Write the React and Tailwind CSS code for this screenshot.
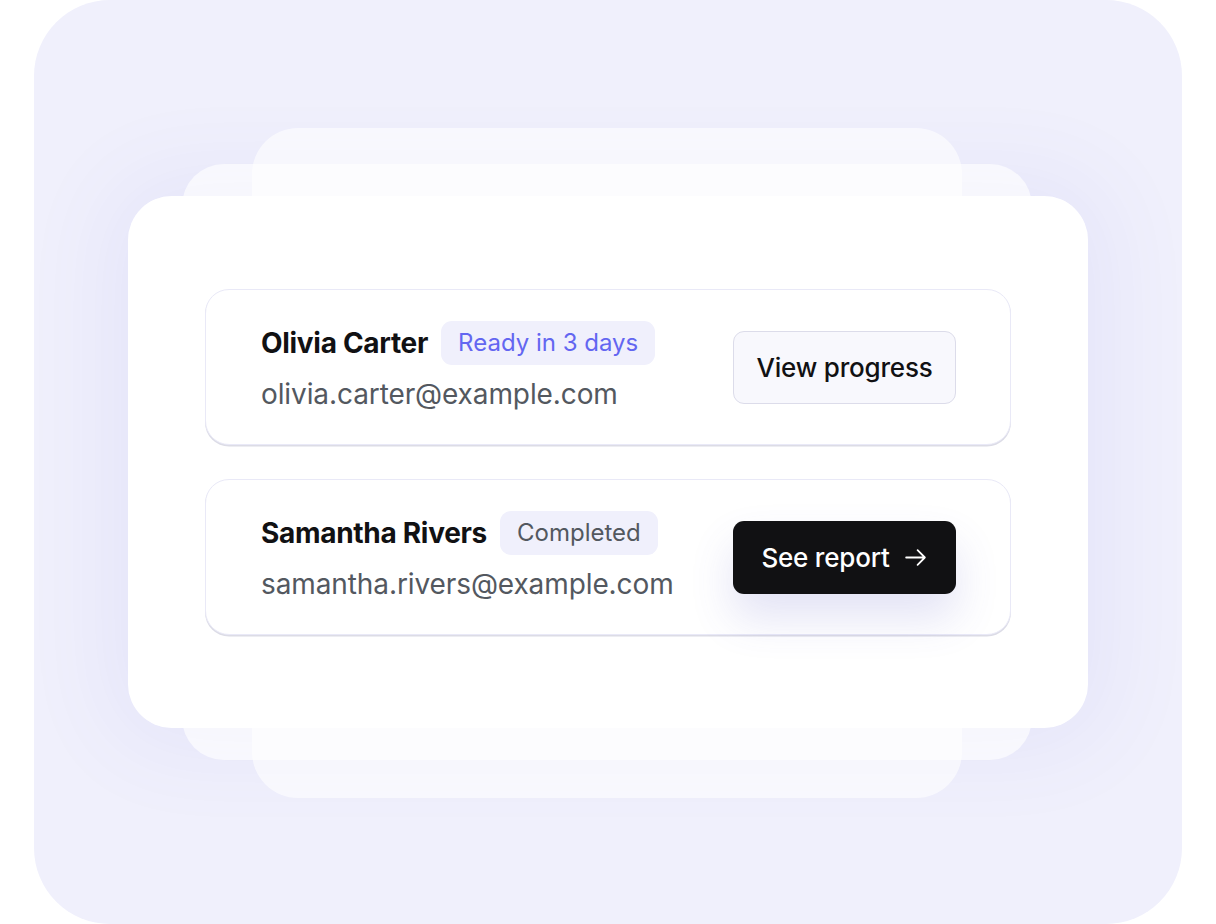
import React from "react";

function Row({ name, badge, badgeClass, email, children }) {
  return (
    <div className="flex h-[156px] items-center justify-between rounded-[24px] border-[1.5px] border-[#e9e9f7] bg-white pl-[55px] pr-[54px] shadow-[0_1.5px_0_#dcdce6]">
      <div className="flex flex-col pb-[6px]">
        <div className="flex items-center gap-[13px]">
          <span className="text-[28px] font-bold leading-none tracking-[-0.3px] text-[#111113]">{name}</span>
          <span className={"flex h-[44px] items-center rounded-[11px] bg-[#f0f0fc] px-[17px] text-[24px] leading-none " + badgeClass}>{badge}</span>
        </div>
        <span className="mt-[15px] text-[28px] leading-none tracking-[-0.1px] text-[#53585f]">{email}</span>
      </div>
      {children}
    </div>
  );
}

export default function App() {
  return (
    <div className="w-[1216px] h-[924px] bg-white px-[34px]" style={{ fontFamily: "Inter, 'Noto Sans', sans-serif" }}>
      <div className="flex h-[924px] justify-center rounded-[76px] bg-[#f0f0fc] pt-[196px]">
        <div className="relative h-[532px] w-[960px] rounded-[44px] shadow-[0_0_90px_20px_rgba(90,90,210,0.07)]">
          <div className="absolute left-[124px] right-[126px] top-[-68px] bottom-[-70px] rounded-[46px] bg-white/60"></div>
          <div className="absolute left-[54px] right-[56px] top-[-32px] bottom-[-32px] rounded-[42px] bg-white/65"></div>
          <div className="relative flex h-full flex-col gap-[34px] rounded-[44px] bg-white px-[77px] pt-[93px]">
            <Row name="Olivia Carter" badge="Ready in 3 days" badgeClass="text-[#6366f1]" email="olivia.carter@example.com">
              <button className="flex h-[73px] w-[223px] items-center justify-center rounded-[11px] border-[1.5px] border-[#dcdcea] bg-[#f8f8fd] text-[26px] font-medium tracking-[-0.2px] text-[#111113]">
                View progress
              </button>
            </Row>
            <Row name="Samantha Rivers" badge="Completed" badgeClass="text-[#53585f]" email="samantha.rivers@example.com">
              <button className="flex h-[73px] w-[223px] items-center justify-center gap-[13px] rounded-[11px] bg-[#111113] text-[26px] font-medium tracking-[-0.2px] text-white shadow-[0_24px_44px_rgba(80,80,190,0.16)]">
                See report
                <svg width="25" height="25" viewBox="0 0 24 24" fill="none" stroke="white" strokeWidth="1.7" strokeLinecap="round" strokeLinejoin="round">
                  <path d="M3 12h18M14 5l7 7-7 7" />
                </svg>
              </button>
            </Row>
          </div>
        </div>
      </div>
    </div>
  );
}
